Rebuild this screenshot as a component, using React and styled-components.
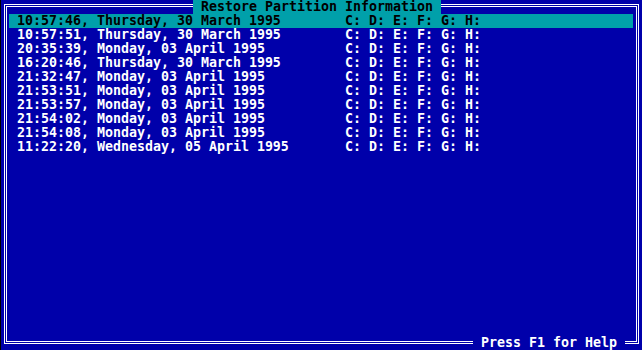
import React from "react"
import styled, { createGlobalStyle } from 'styled-components';

const entries = [
    "10:57:46, Thursday, 30 March 1995",
    "10:57:51, Thursday, 30 March 1995",
    "20:35:39, Monday, 03 April 1995",
    "16:20:46, Thursday, 30 March 1995",
    "21:32:47, Monday, 03 April 1995",
    "21:53:51, Monday, 03 April 1995",
    "21:53:57, Monday, 03 April 1995",
    "21:54:02, Monday, 03 April 1995",
    "21:54:08, Monday, 03 April 1995",
    "11:22:20, Wednesday, 05 April 1995",
];

const App = () => (
    <>
        <GlobalStyle/>
        <Screen>
            <Frame>
                <TitleRow>
                    <Title>Restore Partition Information</Title>
                </TitleRow>
                <List>
                    {entries.map((date, i) => (
                        <Row key={i} selected={i === 0}>
                            <DateCol>{date}</DateCol>
                            <span>C: D: E: F: G: H:</span>
                        </Row>
                    ))}
                </List>
                <HelpRow>
                    <Help>Press F1 for Help</Help>
                </HelpRow>
            </Frame>
        </Screen>
    </>
)

const GlobalStyle = createGlobalStyle`
    html, body{
        margin: 0;
        background: #000;
    }
    body{
        font-family: "DejaVu Sans Mono", "Liberation Mono", monospace;
        font-weight: bold;
        font-size: 13.29px;
        line-height: 14px;
    }
`;
const Screen = styled.div`
    margin-left: 1px;
    width: 641px;
    height: 350px;
    background: #0000aa;
    color: #fff;
    padding-top: 4px;
    box-sizing: border-box;
    overflow: hidden;
`;
const Frame = styled.div`
    margin-left: 3px;
    width: 635px;
    height: 340px;
    border: 3px double #fff;
    box-sizing: border-box;
    display: flex;
    flex-direction: column;
`;
const TitleRow = styled.div`
    display: flex;
    height: 14px;
    margin-top: -7px;
    padding-left: 186px;
`;
const Title = styled.div`
    background: #00a0aa;
    color: #000;
    padding: 0 8px;
    white-space: pre;
`;
const List = styled.div`
    display: flex;
    flex-direction: column;
    margin-left: 2px;
    width: 624px;
`;
const Row = styled.div`
    display: flex;
    height: 14px;
    padding-left: 8px;
    white-space: pre;
    background: ${p => p.selected ? '#00a0aa' : 'transparent'};
    color: ${p => p.selected ? '#000' : '#fff'};
`;
const DateCol = styled.span`
    width: 328px;
    flex: none;
`;
const HelpRow = styled.div`
    margin-top: auto;
    margin-bottom: -9px;
    height: 14px;
    display: flex;
    justify-content: flex-end;
    padding-right: 11px;
`;
const Help = styled.div`
    background: #0000aa;
    padding: 0 8px;
    white-space: pre;
`;

export default App
